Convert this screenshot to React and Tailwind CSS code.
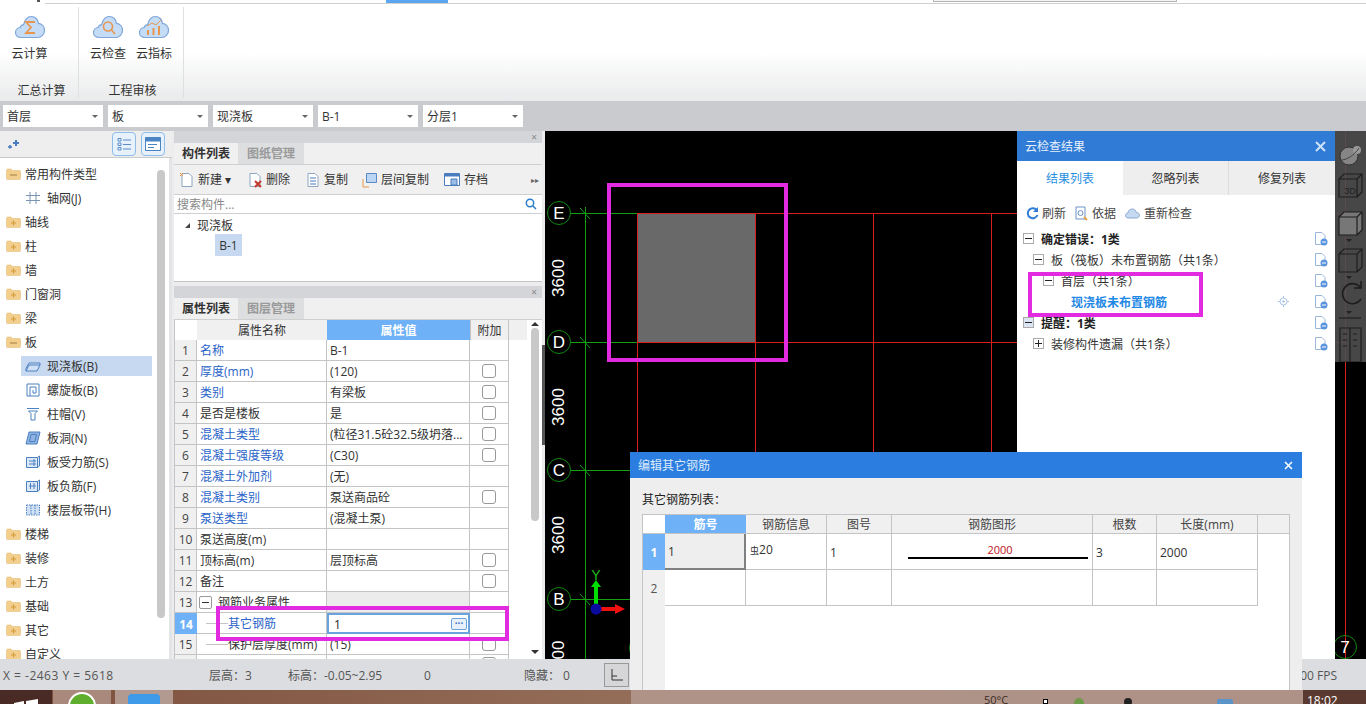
import { Fragment } from 'react';

const Cloud = ({ kind }) => (
    <svg width="32" height="24" viewBox="0 0 32 24">
        <path d="M7 22.500c-3.300 0-5.500-2.300-5.500-5 0-2.600 2-4.800 4.700-5 .4-1.600 1.700-2.700 3.400-2.800C10.700 5 13.300 1.500 17.300 1.500c3.900 0 6.900 3 7.200 6.900 3.500.4 6 3.300 6 7 0 4-3 7.100-7 7.100z" fill="#c5dcf6" stroke="#7ea6d8" strokeWidth="1.200" />
        {kind === 'sum' && <path d="M21 7h-9l5 5.500-5 5.500h9" fill="none" stroke="#e8964f" strokeWidth="1.800" />}
        {kind === 'search' && (
            <g fill="none" stroke="#e8964f" strokeWidth="1.600">
                <circle cx="16" cy="11.500" r="4.500" />
                <path d="M19.500 15l3.500 4" />
            </g>
        )}
        {kind === 'chart' && (
            <g stroke="#e8964f" strokeWidth="2" fill="none">
                <path d="M10 20v-5M15.500 20v-7M21 20v-9" />
                <path d="M9 11l5-3 4 2 5-5" strokeWidth="1" />
            </g>
        )}
    </svg>
);

const RibbonItem = ({ kind, label }) => (
    <div className="flex flex-col items-center w-[46px] pt-[8px]">
        <Cloud kind={kind} />
        <span className="mt-[9px] whitespace-nowrap text-[#333]">{label}</span>
    </div>
);

const Select = ({ value }) => (
    <div className="w-[100px] h-[22px] bg-white flex items-center justify-between pl-[4px] pr-[5px] text-[#333] shrink-0">
        <span className="pt-[2px]">{value}</span>
        <span className="w-0 h-0 border-x-[3px] border-x-transparent border-t-[3px] border-t-[#666]"></span>
    </div>
);

const Folder = ({ open }) => (
    <svg width="15" height="12" viewBox="0 0 15 12" className="shrink-0">
        <path d="M0.500 2.500c0-1 .6-1.500 1.500-1.500h3l1.500 1.500h7c.6 0 1 .4 1 1v7c0 .6-.4 1-1 1h-12c-.6 0-1-.4-1-1z" fill="#f3cf8e" stroke="#e4bd7c" strokeWidth=".6" />
        {open
            ? <path d="M4 7h7" stroke="#b08a50" strokeWidth="1.200" />
            : <path d="M5 7h5M7.500 4.500v5" stroke="#d49a3c" strokeWidth="1.200" />}
    </svg>
);

const TreeIcon = ({ type }) => {
    const s = { fill: 'none', stroke: '#4d80c0', strokeWidth: 1 };
    return (
        <svg width="16" height="14" viewBox="0 0 16 14" className="shrink-0">
            {type === 'grid' && <path d="M1 4.500h14M1 9.500h14M5 1v12M11 1v12" {...s} stroke="#7a94b4" />}
            {type === 'slab' && <path d="M1 12l3-6h11l-3 6zM1 12V9.500L4 4h11v2" {...s} fill="#cfe0f5" />}
            {type === 'spiral' && <path d="M2 1h12v12H2zM5 13V4h6v6H8V7" {...s} />}
            {type === 'cap' && <path d="M2 1.500h12M3.500 4h9l-2.500 2.500v6.500H6V6.500z" {...s} />}
            {type === 'hole' && <path d="M4 1h11l-3 12H1zM6 3.500h5.500l-1.500 7H4.500z" {...s} fill="#8fb3e3" />}
            {type === 'main' && <g><path d="M1.500 2.500h11v10h-11zM12.500 2.500l2-1.500v10l-2 1.500" {...s} fill="#dbe8f8" /><path d="M4 6h7M4 9h7M9 4v7" {...s} /></g>}
            {type === 'neg' && <g><path d="M1.500 2.500h11v10h-11zM12.500 2.500l2-1.500v10l-2 1.500" {...s} fill="#dbe8f8" /><path d="M4 7h7M5.500 4v6M9 4v6" {...s} /></g>}
            {type === 'band' && <path d="M1.500 2h13v10h-13zM6 2v10M10 2v10" {...s} fill="#cfe0f5" strokeDasharray="1.500 1" />}
        </svg>
    );
};

const treeRows = [
    { label: '常用构件类型', open: true },
    { label: '轴网(J)', icon: 'grid' },
    { label: '轴线' },
    { label: '柱' },
    { label: '墙' },
    { label: '门窗洞' },
    { label: '梁' },
    { label: '板', open: true },
    { label: '现浇板(B)', icon: 'slab', active: true },
    { label: '螺旋板(B)', icon: 'spiral' },
    { label: '柱帽(V)', icon: 'cap' },
    { label: '板洞(N)', icon: 'hole' },
    { label: '板受力筋(S)', icon: 'main' },
    { label: '板负筋(F)', icon: 'neg' },
    { label: '楼层板带(H)', icon: 'band' },
    { label: '楼梯' },
    { label: '装修' },
    { label: '土方' },
    { label: '基础' },
    { label: '其它' },
    { label: '自定义' },
];

function LeftTree() {
    return (
        <div className="w-[172px] shrink-0 flex flex-col bg-[#e3e4e6] overflow-hidden">
            <div className="h-[27px] shrink-0 bg-[#eeeeef] flex items-center justify-between pl-[7px] pr-[7px] border-b border-[#c8c9cb]">
                <svg width="14" height="10" viewBox="0 0 14 10">
                    <path d="M9 1v6M6 4h6" stroke="#4a7cc0" strokeWidth="2" />
                    <path d="M3 6v3.500M1 8h4" stroke="#4a7cc0" strokeWidth="1.600" />
                </svg>
                <div className="flex gap-[5px]">
                    <div className="w-[24px] h-[24px] rounded-[4px] border border-[#8fbdea] bg-[#e6f1fc] flex items-center justify-center">
                        <svg width="14" height="14" viewBox="0 0 14 14">
                            <path d="M1 1.500h3v2.500H1zM1 6h3v2.500H1zM1 10.500h3V13H1z" fill="none" stroke="#5a8cc8" />
                            <path d="M6 3h8M6 7.500h8M6 12h8" stroke="#5a8cc8" />
                        </svg>
                    </div>
                    <div className="w-[24px] h-[24px] rounded-[4px] border border-[#8fbdea] bg-[#e6f1fc] flex items-center justify-center">
                        <svg width="16" height="14" viewBox="0 0 16 14">
                            <path d="M.500.500h15v13H.500z" fill="#fff" stroke="#4a84c4" />
                            <path d="M.500.500h15v4H.500z" fill="#4a84c4" />
                            <path d="M3 7.500h9M3 10.500h6" stroke="#4a84c4" />
                        </svg>
                    </div>
                </div>
            </div>
            <div className="flex-1 mr-[3px] bg-white flex min-h-0 overflow-hidden">
                <div className="w-[157px] shrink-0 pt-[4px] pl-[6px]">
                    {treeRows.map((row) => (
                        <div key={row.label} className="h-[24px] flex items-center">
                            {row.icon ? (
                                <div className={`h-[20px] flex items-center gap-[6px] ml-[15px] pl-[4px] w-[131px] ${row.active ? 'bg-[#c6d9f0]' : ''}`}>
                                    <TreeIcon type={row.icon} />
                                    <span className="pt-[2px] whitespace-nowrap text-[#333]">{row.label}</span>
                                </div>
                            ) : (
                                <div className="flex items-center gap-[4px]">
                                    <Folder open={row.open} />
                                    <span className="pt-[2px] whitespace-nowrap text-[#333]">{row.label}</span>
                                </div>
                            )}
                        </div>
                    ))}
                </div>
                <div className="w-[8px] h-[448px] mt-[12px] bg-[#c8c8c8] rounded-[4px] shrink-0"></div>
            </div>
        </div>
    );
}

const PanelTop = ({ tabs }) => (
    <Fragment>
        <div className="h-[12px] bg-[#d4d5d8] flex items-center justify-end pr-[5px] text-[#888] text-[10px] leading-none">×</div>
        <div className="h-[22px] flex bg-[#f0f0f0] border-b border-[#cfcfcf]">
            <div className="w-[64px] flex items-center justify-center font-bold text-[#333]">{tabs[0]}</div>
            <div className="w-[66px] flex items-center justify-center text-[#999] bg-[#dddee0] font-semibold">{tabs[1]}</div>
        </div>
    </Fragment>
);

const ToolBtn = ({ label, w, icon }) => (
    <div className="flex items-center gap-[3px]" style={{ width: w }}>
        {icon}
        <span className="whitespace-nowrap text-[#333]">{label}</span>
    </div>
);

const docIcon = (extra) => (
    <svg width="16" height="16" viewBox="0 0 16 16" className="shrink-0">
        <path d="M3 1.500h7l3 3v10H3z" fill="#fff" stroke="#8fa6c0" />
        {extra}
    </svg>
);

const props = [
    { no: 1, name: '名称', val: 'B-1', blue: true },
    { no: 2, name: '厚度(mm)', val: '(120)', blue: true, check: true },
    { no: 3, name: '类别', val: '有梁板', blue: true, check: true },
    { no: 4, name: '是否是楼板', val: '是', check: true },
    { no: 5, name: '混凝土类型', val: '(粒径31.5砼32.5级坍落...', blue: true, check: true },
    { no: 6, name: '混凝土强度等级', val: '(C30)', blue: true, check: true },
    { no: 7, name: '混凝土外加剂', val: '(无)', blue: true },
    { no: 8, name: '混凝土类别', val: '泵送商品砼', blue: true, check: true },
    { no: 9, name: '泵送类型', val: '(混凝土泵)', blue: true },
    { no: 10, name: '泵送高度(m)', val: '' },
    { no: 11, name: '顶标高(m)', val: '层顶标高', check: true },
    { no: 12, name: '备注', val: '', check: true },
];

const cellLine = 'border-r border-b border-[#c4c4c4]';

function PropRow({ row }) {
    return (
        <div className="flex h-[21px] w-[334px]">
            <div className={`w-[22px] ${cellLine} bg-[#f0f0f0] flex items-center justify-center pt-[2px] text-[#444]`}>{row.no}</div>
            <div className={`w-[130px] ${cellLine} flex items-center pl-[3px] pt-[2px] whitespace-nowrap ${row.blue ? 'text-[#2a63c8]' : 'text-[#333]'}`}>{row.name}</div>
            <div className={`w-[143px] ${cellLine} flex items-center pl-[3px] pt-[2px] whitespace-nowrap text-[#333]`}>{row.val}</div>
            <div className={`w-[39px] ${cellLine} flex items-center justify-center`}>
                {row.check && <span className="w-[14px] h-[14px] rounded-[3px] border border-[#999] bg-white"></span>}
            </div>
        </div>
    );
}

function MiddlePanels() {
    return (
        <div className="w-[373px] shrink-0 flex flex-col bg-[#ececee] pl-[2px] pr-[3px] relative">
            <div className="h-[151px] shrink-0 flex flex-col border-b border-[#c4c4c4]">
                <PanelTop tabs={['构件列表', '图纸管理']} />
                <div className="h-[30px] bg-[#f0f0f0] flex items-center pl-[5px] border-b border-[#cfcfcf]">
                    <ToolBtn w={68} label="新建 ▾" icon={docIcon(<path d="M1 1l3 3M4 1L1 4" stroke="#e8964f" />)} />
                    <ToolBtn w={58} label="删除" icon={docIcon(<path d="M8 9l6 6M14 9l-6 6" stroke="#c0392b" strokeWidth="2" />)} />
                    <ToolBtn w={56} label="复制" icon={docIcon(<path d="M5 6h6M5 9h6M5 12h6" stroke="#4a7cc0" />)} />
                    <ToolBtn w={82} label="层间复制" icon={
                        <svg width="17" height="16" viewBox="0 0 17 16" className="shrink-0">
                            <path d="M2 7v8h6" fill="none" stroke="#e8964f" />
                            <path d="M5.500 1.500h10v9h-10z" fill="#bcd5f2" stroke="#5a8ac6" />
                        </svg>
                    } />
                    <ToolBtn w={60} label="存档" icon={
                        <svg width="18" height="14" viewBox="0 0 16 14" className="shrink-0">
                            <path d="M.500.500h15v12H.500z" fill="#fff" stroke="#4a7cc0" />
                            <path d="M.500.500h15v3H.500z" fill="#4a7cc0" />
                            <path d="M7 6h6v6H7z" fill="#9cbde6" stroke="#4a7cc0" />
                        </svg>
                    } />
                    <span className="ml-auto mr-[3px] text-[8px] text-[#666]">▸▸</span>
                </div>
                <div className="h-[19px] bg-white flex items-center justify-between pl-[3px] pr-[5px] border-b border-[#cfcfcf] text-[#888]">
                    <span className="pt-[2px]">搜索构件...</span>
                    <svg width="12" height="12" viewBox="0 0 12 12">
                        <circle cx="5" cy="5" r="3.700" fill="none" stroke="#2b7cc9" strokeWidth="1.500" />
                        <path d="M8 8l3 3" stroke="#2b7cc9" strokeWidth="1.500" />
                    </svg>
                </div>
                <div className="flex-1 bg-white pl-[11px] pt-[1px] text-[#333]">
                    <div className="h-[21px] flex items-center gap-[7px]">
                        <span className="w-0 h-0 border-l-[5px] border-l-transparent border-b-[5px] border-b-[#444]"></span>
                        <span>现浇板</span>
                    </div>
                    <div className="ml-[30px] -mt-[2px] w-[27px] h-[22px] bg-[#c6d9f0] flex items-center justify-center pt-[2px]">B-1</div>
                </div>
            </div>
            <div className="h-[4px] shrink-0"></div>
            <div className="flex-1 min-h-0 flex flex-col overflow-hidden">
                <PanelTop tabs={['属性列表', '图层管理']} />
                <div className="flex-1 bg-white flex overflow-hidden border-l border-[#c4c4c4]">
                    <div className="w-[352px] shrink-0">
                        <div className="flex h-[20px] w-[352px] bg-[#f0f0f0]">
                            <div className="w-[22px] bg-white"></div>
                            <div className="w-[130px] flex items-center justify-center pt-[2px] text-[#333]">属性名称</div>
                            <div className="w-[143px] bg-[#6eb1f7] text-white flex items-center justify-center pt-[2px] font-semibold">属性值</div>
                            <div className="w-[39px] flex items-center justify-center pt-[2px] text-[#333] border-x border-[#c4c4c4]">附加</div>
                        </div>
                        {props.map((row) => <PropRow key={row.no} row={row} />)}
                        <div className="flex h-[21px] w-[334px]">
                            <div className={`w-[22px] ${cellLine} bg-[#f0f0f0] flex items-center justify-center pt-[2px] text-[#444]`}>13</div>
                            <div className={`w-[130px] ${cellLine} flex items-center gap-[6px] pl-[2px] whitespace-nowrap text-[#333]`}>
                                <span className="w-[13px] h-[13px] border border-[#999] rounded-[2px] flex items-center justify-center shrink-0">
                                    <span className="w-[7px] h-px bg-[#333]"></span>
                                </span>
                                <span className="pt-[2px]">钢筋业务属性</span>
                            </div>
                            <div className={`w-[143px] ${cellLine} bg-[#ececec]`}></div>
                            <div className={`w-[39px] ${cellLine}`}></div>
                        </div>
                        <div className="flex h-[21px] w-[334px]">
                            <div className="w-[22px] bg-[#6eb1f7] text-white font-bold flex items-center justify-center pt-[2px]">14</div>
                            <div className={`w-[130px] ${cellLine} flex items-center whitespace-nowrap text-[#2a63c8]`}>
                                <span className="w-[22px] h-px bg-[#c4c4c4] ml-[9px]"></span>
                                <span className="pt-[2px]">其它钢筋</span>
                            </div>
                            <div className="w-[143px] border-2 border-[#6ba3dc] flex items-center justify-between pl-[5px] pr-[1px] text-[#222]">
                                <span className="pt-[2px]">1</span>
                                <span className="w-[16px] h-[12px] rounded-[2px] border border-[#6ba3dc] bg-[#e8f1fb] text-[#3f74bd] text-[10px] font-bold leading-[8px] text-center">···</span>
                            </div>
                            <div className={`w-[39px] ${cellLine}`}></div>
                        </div>
                        <div className="flex h-[21px] w-[334px]">
                            <div className={`w-[22px] ${cellLine} bg-[#f0f0f0] flex items-center justify-center pt-[2px] text-[#444]`}>15</div>
                            <div className={`w-[130px] ${cellLine} flex items-center whitespace-nowrap text-[#333]`}>
                                <span className="w-[22px] h-px bg-[#c4c4c4] ml-[9px]"></span>
                                <span className="pt-[2px]">保护层厚度(mm)</span>
                            </div>
                            <div className={`w-[143px] ${cellLine} flex items-center pl-[3px] pt-[2px] text-[#333]`}>(15)</div>
                            <div className={`w-[39px] ${cellLine} flex items-center justify-center`}>
                                <span className="w-[14px] h-[14px] rounded-[3px] border border-[#999]"></span>
                            </div>
                        </div>
                        <div className="flex h-[21px] w-[334px]">
                            <div className={`w-[22px] ${cellLine} bg-[#f0f0f0]`}></div>
                            <div className={`w-[130px] ${cellLine}`}></div>
                            <div className={`w-[143px] ${cellLine}`}></div>
                            <div className={`w-[39px] ${cellLine} flex justify-center`}>
                                <span className="w-[14px] h-[14px] mt-[2px] rounded-[3px] border border-[#999]"></span>
                            </div>
                        </div>
                    </div>
                    <div className="w-[10px] ml-[3px] flex flex-col items-center pt-[2px]">
                        <span className="w-0 h-0 border-x-[4px] border-x-transparent border-b-[4px] border-b-[#333]"></span>
                        <div className="w-[8px] h-[193px] mt-[2px] bg-[#c8c8c8] rounded-[4px]"></div>
                        <span className="w-0 h-0 mt-auto mb-[5px] border-x-[4px] border-x-transparent border-t-[4px] border-t-[#333]"></span>
                    </div>
                </div>
            </div>
            <div className="absolute right-0 top-[214px] w-[3px] h-[100px] bg-[#555]"></div>
        </div>
    );
}

const AxisLabel = ({ y, name }) => (
    <g>
        <circle cx="559" cy={y} r="11.500" fill="none" stroke="#0f8a0f" />
        <text x="559" y={y + 6} fill="#fff" fontSize="17" textAnchor="middle" fontFamily="Liberation Sans">{name}</text>
    </g>
);

const Dim = ({ y }) => (
    <text transform={`translate(564 ${y}) rotate(-90)`} fill="#fff" fontSize="17" textAnchor="middle" fontFamily="Liberation Sans">3600</text>
);

// grid lines as 1px rects so they land exactly on a pixel
const redLines = [
    [637, 213, 708, 1], [637, 342, 708, 1],
    [637, 213, 1, 239], [755, 213, 1, 239], [873, 213, 1, 239], [991, 213, 1, 239],
    [1345, 131, 1, 528],
];
const greenLines = [
    [571, 213, 66, 1], [571, 342, 66, 1], [571, 470, 59, 1], [571, 599, 59, 1],
    [585, 207, 1, 452],
];

function CadCanvas() {
    return (
        <div className="flex-1 min-w-0 bg-black">
            <svg width="821" height="528" viewBox="545 131 821 528" className="block">
                <rect x="637" y="213" width="118" height="129" fill="#696969" />
                {redLines.map(([x, y, w, h]) => (
                    <rect key={`${x}-${y}-${w}`} x={x} y={y} width={w} height={h} fill="#d81e1e" shapeRendering="crispEdges" />
                ))}
                {greenLines.map(([x, y, w, h]) => (
                    <rect key={`${x}-${y}-${w}`} x={x} y={y} width={w} height={h} fill="#12a012" shapeRendering="crispEdges" />
                ))}
                <path d="M580 208l10 11M580 337l10 11M580 465l10 11M580 594l10 11" stroke="#12a012" fill="none" />
                <g stroke="#0f8a0f" fill="none">
                    <circle cx="641" cy="648" r="11.500" />
                    <circle cx="1345" cy="647" r="11.500" />
                </g>
                <AxisLabel y={213} name="E" />
                <AxisLabel y={342} name="D" />
                <AxisLabel y={470} name="C" />
                <AxisLabel y={599} name="B" />
                <path d="M594 604v-17h-3l5-7 5 7h-3v17z" fill="#00e000" />
                <path d="M601 607h14v-3l10 5-10 5v-3h-14z" fill="#f01010" />
                <circle cx="596" cy="609" r="5.500" fill="#0a0aa0" />
                <Dim y={278} />
                <Dim y={407} />
                <Dim y={535} />
                <text transform="translate(564 650) rotate(-90)" fill="#fff" fontSize="17" textAnchor="middle" fontFamily="Liberation Sans">00</text>
                <text x="1345" y="653" fill="#fff" fontSize="17" textAnchor="middle" fontFamily="Liberation Sans">7</text>
                <text x="596" y="580" fill="#1fbf1f" fontSize="14" textAnchor="middle" fontFamily="Liberation Sans">Y</text>
            </svg>
        </div>
    );
}

const MiniBox = ({ sign, tint }) => (
    <span className={`w-[11px] h-[11px] shrink-0 border border-[#aaa] flex items-center justify-center relative ${tint ? 'bg-[#dbe5f3]' : 'bg-white'}`}>
        <span className="w-[7px] h-px bg-[#222]"></span>
        {sign === '+' && <span className="absolute w-px h-[7px] bg-[#222]"></span>}
    </span>
);

const DocBadge = () => (
    <svg width="14" height="14" viewBox="0 0 14 14" className="shrink-0">
        <path d="M1.500.500h6.500l3 3v9H1.500z" fill="#fff" stroke="#9ab8de" />
        <circle cx="10" cy="10" r="3.500" fill="#5a94dc" />
        <path d="M8 10h4" stroke="#fff" />
    </svg>
);

const checkRows = [
    { label: '确定错误：1类', pl: 6, bold: true, box: '-' },
    { label: '板（筏板）未布置钢筋（共1条）', pl: 16, box: '-' },
    { label: '首层（共1条）', pl: 26, box: '-' },
    { label: '现浇板未布置钢筋', pl: 54, link: true },
    { label: '提醒：1类', pl: 6, bold: true, box: '-', tint: true },
    { label: '装修构件遗漏（共1条）', pl: 16, box: '+' },
];

function CheckPanel() {
    return (
        <div className="absolute left-[1017px] top-[131px] w-[318px] h-[528px] bg-white">
            <div className="h-[30px] bg-[#2f7bd6] flex items-center justify-between pl-[8px] pr-[9px] text-[#e6f0fb]">
                <span className="pt-[2px]">云检查结果</span>
                <svg width="11" height="11" viewBox="0 0 11 11">
                    <path d="M1 1l9 9M10 1l-9 9" stroke="#cfe2f8" strokeWidth="2" />
                </svg>
            </div>
            <div className="h-[34px] flex text-[#333]">
                <div className="w-[106px] flex items-center justify-center pt-[2px] text-[#2b8fe0]">结果列表</div>
                <div className="w-[106px] bg-[#eeeeee] flex items-center justify-center pt-[2px] border-r border-[#dcdcdc]">忽略列表</div>
                <div className="flex-1 bg-[#eeeeee] flex items-center justify-center pt-[2px]">修复列表</div>
            </div>
            <div className="h-[33px] flex items-center pl-[9px] pt-[4px] text-[#444]">
                <svg width="13" height="13" viewBox="0 0 13 13" className="mr-[3px]">
                    <path d="M11 3.500A5 5 0 1 0 11.500 8" fill="none" stroke="#2f7bd6" strokeWidth="2" />
                    <path d="M12 0v5H7z" fill="#2f7bd6" />
                </svg>
                <span className="mr-[9px]">刷新</span>
                <svg width="13" height="15" viewBox="0 0 13 15" className="mr-[4px]">
                    <path d="M1 1h9v12H1z" fill="#fff" stroke="#6b93c9" />
                    <circle cx="5.500" cy="7" r="2.500" fill="none" stroke="#6b93c9" />
                    <path d="M9 11l3 3" stroke="#e8a040" strokeWidth="2" />
                </svg>
                <span className="mr-[9px]">依据</span>
                <svg width="15" height="11" viewBox="0 0 15 11" className="mr-[4px]">
                    <path d="M3.500 10C1.500 10 .500 8.700.500 7.400S1.500 5 3 5c.3-2.500 2-4 4.200-4 2 0 3.600 1.300 4 3.300 1.900.2 3.300 1.400 3.300 3S13 10 11.500 10z" fill="#c5d9f1" stroke="#8aa8cf" />
                </svg>
                <span>重新检查</span>
            </div>
            {checkRows.map((row) => (
                <div key={row.label} className="h-[21px] flex items-center pr-[7px] whitespace-nowrap" style={{ paddingLeft: row.pl }}>
                    {row.box && <MiniBox sign={row.box} tint={row.tint} />}
                    {row.link
                        ? <span className="font-bold text-[#1e88e5] pt-[2px]">{row.label}</span>
                        : <span className={`ml-[7px] pt-[2px] ${row.bold ? 'font-bold text-[#222]' : 'text-[#333]'}`}>{row.label}</span>}
                    {row.link && (
                        <svg width="11" height="11" viewBox="0 0 11 11" className="ml-[111px] shrink-0">
                            <circle cx="5.500" cy="5.500" r="3.500" fill="none" stroke="#a9c4e6" />
                            <circle cx="5.500" cy="5.500" r="1.200" fill="#a9c4e6" />
                            <path d="M5.500 0v2M5.500 9v2M0 5.500h2M9 5.500h2" stroke="#a9c4e6" />
                        </svg>
                    )}
                    <span className="ml-auto"><DocBadge /></span>
                </div>
            ))}
        </div>
    );
}

function RebarDialog() {
    return (
        <div className="absolute left-[630px] top-[452px] w-[672px] h-[252px] bg-[#eeeeee] flex flex-col">
            <div className="h-[26px] shrink-0 bg-[#2b7de0] flex items-center justify-between pl-[8px] pr-[9px] text-[#dcebfb]">
                <span className="pt-[2px]">编辑其它钢筋</span>
                <svg width="9" height="9" viewBox="0 0 9 9">
                    <path d="M1 1l7 7M8 1L1 8" stroke="#fff" strokeWidth="1.500" />
                </svg>
            </div>
            <div className="h-[36px] shrink-0 flex items-center pl-[12px] pt-[8px] text-[#222]">其它钢筋列表：</div>
            <div className="ml-[12px] w-[648px] flex-1 flex flex-col border-t border-x border-[#c4c4c4] bg-white">
                <div className="flex h-[19px] shrink-0 bg-[#f0f0f0] border-b border-[#c4c4c4] text-[#444]">
                    <div className="w-[22px] bg-white"></div>
                    <div className="w-[81px] bg-[#6eb1f7] text-white font-semibold flex items-center justify-center pt-[2px]">筋号</div>
                    <div className="w-[81px] border-r border-[#c4c4c4] flex items-center justify-center pt-[2px]">钢筋信息</div>
                    <div className="w-[65px] border-r border-[#c4c4c4] flex items-center justify-center pt-[2px]">图号</div>
                    <div className="w-[201px] border-r border-[#c4c4c4] flex items-center justify-center pt-[2px]">钢筋图形</div>
                    <div className="w-[64px] border-r border-[#c4c4c4] flex items-center justify-center pt-[2px]">根数</div>
                    <div className="w-[101px] border-r border-[#c4c4c4] flex items-center justify-center pt-[2px]">长度(mm)</div>
                </div>
                <div className="flex-1 flex min-h-0">
                    <div className="w-[22px] shrink-0 bg-[#f0f0f0] flex flex-col">
                        <div className="h-[36px] bg-[#6eb1f7] text-white font-bold flex items-center justify-center pt-[2px]">1</div>
                        <div className="h-[36px] flex items-center justify-center pt-[2px] text-[#555]">2</div>
                    </div>
                    <div className="flex-1 flex flex-col text-[#333]">
                        <div className="flex h-[36px] w-[594px]">
                            <div className="w-[81px] bg-[#eeeeee] border-r-2 border-b-2 border-[#808080] flex items-center pl-[3px] pt-[2px]">1</div>
                            <div className="w-[81px] border-r border-b border-[#c4c4c4] pl-[4px] pt-[10px] whitespace-nowrap"><span className="text-[9px]">虫</span>20</div>
                            <div className="w-[65px] border-r border-b border-[#c4c4c4] flex items-center pl-[3px] pt-[2px]">1</div>
                            <div className="w-[201px] border-r border-b border-[#c4c4c4] flex flex-col items-start pl-[16px] pt-[10px]">
                                <span className="w-[180px] text-center pl-[4px] text-[11px] leading-[11px] text-[#c01020]">2000</span>
                                <span className="w-[180px] h-[2px] bg-black mt-[2px]"></span>
                            </div>
                            <div className="w-[64px] border-r border-b border-[#c4c4c4] flex items-center pl-[3px] pt-[2px]">3</div>
                            <div className="w-[101px] border-r border-b border-[#c4c4c4] flex items-center pl-[3px] pt-[2px]">2000</div>
                        </div>
                        <div className="flex h-[36px] w-[594px]">
                            <div className="w-[81px] border-r border-b border-[#c4c4c4]"></div>
                            <div className="w-[81px] border-r border-b border-[#c4c4c4]"></div>
                            <div className="w-[65px] border-r border-b border-[#c4c4c4]"></div>
                            <div className="w-[201px] border-r border-b border-[#c4c4c4]"></div>
                            <div className="w-[64px] border-r border-b border-[#c4c4c4]"></div>
                            <div className="w-[101px] border-r border-b border-[#c4c4c4]"></div>
                        </div>
                    </div>
                </div>
            </div>
        </div>
    );
}

function ViewTools() {
    return (
        <div className="absolute left-[1335px] top-[131px] w-[31px] h-[231px] bg-[#4f4f4f]/90">
            <svg width="31" height="231" viewBox="0 0 31 231" className="block">
                <circle cx="14" cy="25" r="9" fill="#858585" stroke="#333" />
                <circle cx="22" cy="19" r="4" fill="#999" />
                <path d="M4 29c6 1 15-4 20-12" fill="none" stroke="#444" />
                <g fill="none" stroke="#1e1e1e" strokeWidth="1.200">
                    <path d="M4 48h18v18H4zM4 48l5-5h18v18l-5 5M22 48l5-5" />
                    <path d="M4 86h18v18H4zM4 86l5-5h18v18l-5 5M22 86l5-5" fill="#777" />
                    <path d="M4 123h18v18H4zM4 123l5-5h18v18l-5 5M22 123l5-5" />
                    <path d="M25 156a10 10 0 1 0 1 12M26 150v7h-7" strokeWidth="1.600" />
                    <path d="M4 187h22" />
                    <path d="M5 197h21v34H5zM15 197v34M8 203h4M8 209h4M8 215h4M18 203h4M18 209h4M18 215h4" />
                </g>
                <text x="15" y="63" fill="#222" fontSize="9" textAnchor="middle" fontFamily="Liberation Sans">3D</text>
                <path d="M11 108h6l-3 3zM11 145h6l-3 3zM11 180h6l-3 3z" fill="#222" />
            </svg>
        </div>
    );
}

const Pink = ({ className }) => (
    <div className={`absolute border-[4px] border-[#e22be0] pointer-events-none z-10 ${className}`}></div>
);

export default function App() {
    return (
        <div className="relative w-[1366px] h-[704px] overflow-hidden flex flex-col bg-white text-[12px] leading-none font-['Open_Sans','Noto_Sans_CJK_SC',sans-serif]">
            <div className="h-[4px] shrink-0 flex">
                <div className="w-[45px] flex justify-end pr-[5px]">
                    <span className="w-[3px] h-[2px] bg-[#555]"></span>
                </div>
                <div className="flex-1 flex border-b border-[#d0d0d0]">
                    <div className="w-[341px]"></div>
                    <div className="w-[62px] bg-[#5aa6f0]"></div>
                    <div className="w-[485px]"></div>
                    <div className="w-[244px] h-[2px] bg-[#f4f4f4] border-x border-b border-[#b5b5b5]"></div>
                </div>
            </div>

            <div className="h-[97px] shrink-0 flex bg-gradient-to-b from-white from-50% to-[#e9eaeb]">
                <div className="w-[79px] flex flex-col items-center border-r border-[#dfe0e2] my-[3px] pr-[19px]">
                    <RibbonItem kind="sum" label="云计算" />
                    <span className="mt-auto mb-[1px] whitespace-nowrap text-[#333] pl-[24px]">汇总计算</span>
                </div>
                <div className="w-[105px] flex flex-col items-center border-r border-[#dfe0e2] my-[3px]">
                    <div className="flex">
                        <RibbonItem kind="search" label="云检查" />
                        <RibbonItem kind="chart" label="云指标" />
                    </div>
                    <span className="mt-auto mb-[1px] whitespace-nowrap text-[#333] pl-[3px]">工程审核</span>
                </div>
            </div>

            <div className="h-[30px] shrink-0 bg-[#c9cbce] flex items-center gap-[5px] pl-[3px]">
                <Select value="首层" />
                <Select value="板" />
                <Select value="现浇板" />
                <Select value="B-1" />
                <Select value="分层1" />
            </div>

            <div className="h-[528px] shrink-0 flex">
                <LeftTree />
                <MiddlePanels />
                <CadCanvas />
            </div>

            <div className="h-[31px] shrink-0 bg-[#dcdde0] flex items-center pt-[2px] text-[#555]">
                <span className="ml-[3px] w-[206px] whitespace-nowrap tracking-[0.5px]">X = -2463 Y = 5618</span>
                <span className="w-[79px]">层高：3</span>
                <span className="w-[136px] whitespace-nowrap">标高：-0.05~2.95</span>
                <span className="w-[100px]">0</span>
                <span className="w-[80px]">隐藏： 0</span>
                <div className="w-[25px] h-[24px] -mt-[2px] border border-[#999] bg-[#d6d6d8] flex items-center justify-center">
                    <svg width="14" height="14" viewBox="0 0 14 14">
                        <path d="M2 1v11h11M2 8h5" fill="none" stroke="#333" />
                    </svg>
                </div>
                <span className="ml-auto mr-[29px] whitespace-nowrap">00 FPS</span>
            </div>

            <div className="h-[14px] shrink-0 relative z-20 flex overflow-hidden bg-gradient-to-r from-[#7c4f3c] via-[#96705c] to-[#8d6b5a]">
                <div className="w-[52px] bg-[#4a2a25] flex justify-center pt-[9px]">
                    <svg width="26" height="16" viewBox="0 0 26 16" className="shrink-0">
                        <path d="M1 4l10-2v14H1zM13 2l12-2v16H13z" fill="#fff" />
                    </svg>
                </div>
                <div className="w-[58px] ml-[1px] bg-[#a8897c] flex justify-center pt-[2px]">
                    <span className="w-[28px] h-[28px] shrink-0 rounded-full bg-[#5fae2d] border-2 border-white"></span>
                </div>
                <div className="w-[58px] ml-[4px] bg-[#b39a90] flex justify-center pt-[4px]">
                    <span className="w-[32px] h-[20px] shrink-0 rounded-[4px] bg-[#3d9be9]"></span>
                </div>
                <div className="w-[458px]"></div>
                <div className="w-[672px] bg-[#b0958a]/95 flex items-start">
                    <span className="ml-[353px] mt-[4px] text-[#3a2a25] text-[11px] leading-none whitespace-nowrap">50°C</span>
                    <span className="ml-[35px] mt-[9px] w-[5px] h-[5px] bg-white border border-black"></span>
                    <span className="ml-[26px] mt-[8px] w-[10px] h-[10px] rounded-full bg-[#6f9a4a]"></span>
                    <span className="ml-[40px] mt-[8px] w-[8px] h-[8px] rounded-full bg-[#222]"></span>
                    <span className="ml-[85px] mt-[9px] w-[16px] h-[10px] rounded-[2px] bg-[#5a94c8]"></span>
                </div>
                <div className="flex-1 bg-[#5a3a30] text-white pl-[4px] pt-[5px] whitespace-nowrap">18:02</div>
            </div>

            <CheckPanel />
            <ViewTools />
            <RebarDialog />

            <Pink className="left-[607px] top-[183px] w-[181px] h-[179px]" />
            <Pink className="left-[1028px] top-[272px] w-[175px] h-[45px]" />
            <Pink className="left-[216px] top-[606px] w-[293px] h-[35px]" />
        </div>
    );
}
